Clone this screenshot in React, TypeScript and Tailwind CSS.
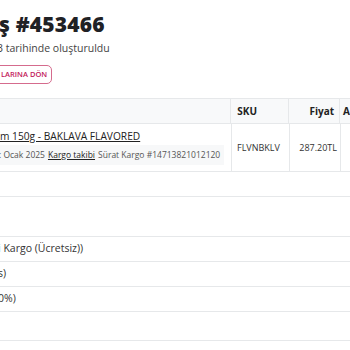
export default function App() {
  const font = { fontFamily: '"Open Sans", "Liberation Sans", sans-serif' };
  return (
    <div className="w-[350px] h-[350px] overflow-hidden bg-white text-[#212529]" style={font}>
      <div className="pt-[9px]">
        <h1 className="ml-[-1px] text-[21px] leading-[30px] font-extrabold tracking-[0.2px] text-[#1f2125]">
          ş #453466
        </h1>
        <p className="ml-[-3px] mt-[2px] text-[10.5px] leading-[14px] text-[#444]">
          3 tarihinde oluşturuldu
        </p>
        <div className="mt-[10px] flex">
          <span className="ml-[-12px] rounded-[5px] border border-[#d56b8d] pl-[12px] pr-[4px] py-[3px] text-[7.5px] leading-[11px] font-semibold text-[#c2185b]">
            LARINA DÖN
          </span>
        </div>
      </div>

      <div className="mt-[14px] border-t border-[#e6e8ea]">
        <div className="flex h-[25px] bg-[#f8f9fa] border-b border-[#e6e8ea] text-[10px] font-bold text-[#222]">
          <div className="w-[232px] border-r border-[#e6e8ea]" />
          <div className="w-[58px] border-r border-[#e6e8ea] flex items-center pl-[6px]">SKU</div>
          <div className="w-[51px] border-r border-[#e6e8ea] flex items-center justify-end pr-[5px]">Fiyat</div>
          <div className="flex-1 flex items-center pl-[3px]">A</div>
        </div>
        <div className="flex h-[48px] border-b border-[#e6e8ea]">
          <div className="w-[232px] border-r border-[#e6e8ea] pt-[6px] pr-[7px]">
            <div className="text-[10.2px] leading-[13px] font-medium underline text-[#222] whitespace-nowrap">m 150g - BAKLAVA FLAVORED</div>
            <div className="mt-[2px] bg-[#f7f8f9] h-[20px] flex items-center text-[8.5px] text-[#555] whitespace-nowrap overflow-hidden">
              <span className="ml-[-1px]">: Ocak 2025</span>
              <span className="underline ml-[3px] text-[#222]">Kargo takibi</span>
              <span className="ml-[3px]">Sürat Kargo #14713821012120</span>
            </div>
          </div>
          <div className="w-[58px] border-r border-[#e6e8ea] flex items-center pl-[5px] text-[9px] text-[#333]">FLVNBKLV</div>
          <div className="w-[51px] border-r border-[#e6e8ea] flex items-center justify-end pr-[3px] text-[9px] text-[#333]">287.20TL</div>
          <div className="flex-1" />
        </div>
      </div>

      <div className="text-[10.5px] text-[#333]">
        <div className="h-[25px] border-b border-[#e6e8ea]" />
        <div className="h-[40px] border-b border-[#e6e8ea]" />
        <div className="h-[25px] border-b border-[#e6e8ea] flex items-center">
          <span className="ml-[-2px] whitespace-nowrap">i Kargo (Ücretsiz))</span>
        </div>
        <div className="h-[25px] border-b border-[#e6e8ea] flex items-center">
          <span className="ml-[-2px]">s)</span>
        </div>
        <div className="h-[25px] border-b border-[#e6e8ea] flex items-center">
          <span className="ml-[-2px]">0%)</span>
        </div>
        <div className="h-[29px] border-b border-[#e6e8ea]" />
      </div>
    </div>
  );
}
